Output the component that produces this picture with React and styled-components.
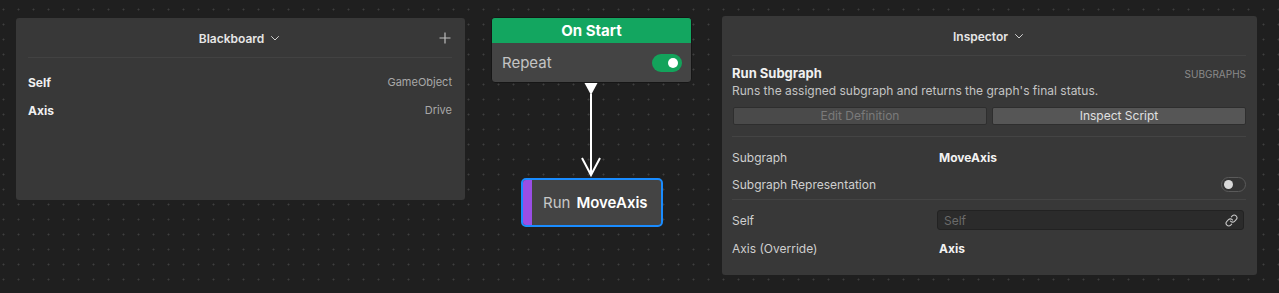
import React from "react";
import styled, { createGlobalStyle } from "styled-components";

const Global = createGlobalStyle`
  html, body { margin: 0; padding: 0; background: #1f1f1f; }
  body { font-family: Inter, "Noto Sans", sans-serif; -webkit-font-smoothing: antialiased; }
  * { box-sizing: border-box; }
`;

const Canvas = styled.div`
  width: 1279px;
  height: 293px;
  overflow: hidden;
  background-color: #1f1f1f;
  background-image: radial-gradient(circle, #3e3e3e 0.8px, transparent 1.2px);
  background-size: 15px 15px;
  background-position: -4px 2px;
  display: flex;
  align-items: flex-start;
  padding-left: 16px;
`;

const Panel = styled.section`
  background: #383838;
  border-radius: 3px;
  width: ${(p) => p.$w}px;
  height: ${(p) => p.$h}px;
  margin-top: ${(p) => p.$top}px;
  padding: ${(p) => p.$pad};
  display: flex;
  flex-direction: column;
  flex-shrink: 0;
`;

const PanelHeader = styled.header`
  position: relative;
  height: 40px;
  padding-top: 1px;
  display: flex;
  align-items: center;
  justify-content: center;
  gap: 5px;
  border-bottom: 1px solid #424242;
  color: #e6e6e6;
  font-size: 12px;
  font-weight: 600;
`;

const HeaderAction = styled.span`
  position: absolute;
  right: 1px;
  top: 50%;
  transform: translateY(-50%);
  display: flex;
  color: #bdbdbd;
`;

const VarList = styled.div`
  display: flex;
  flex-direction: column;
  padding-top: 16px;
  gap: 12px;
`;

const VarRow = styled.div`
  display: flex;
  justify-content: space-between;
  align-items: center;
  height: 16px;
`;

const VarName = styled.span`
  color: #f0f0f0;
  font-size: 12px;
  font-weight: 700;
`;

const VarType = styled.span`
  color: #a8a8a8;
  font-size: 11px;
`;

const Graph = styled.div`
  position: relative;
  width: 257px;
  height: 293px;
  flex-shrink: 0;
`;

const Node = styled.div`
  position: absolute;
  left: ${(p) => p.$x}px;
  top: ${(p) => p.$y}px;
  width: ${(p) => p.$w}px;
  height: ${(p) => p.$h}px;
  background: #444444;
  border-radius: 4px;
  overflow: hidden;
`;

const StartNode = styled(Node)`
  border: 1px solid #161616;
  display: flex;
  flex-direction: column;
`;

const NodeTitle = styled.div`
  background: #13a660;
  height: 25px;
  display: flex;
  align-items: center;
  justify-content: center;
  color: #ffffff;
  font-size: 15px;
  font-weight: 700;
`;

const NodeBody = styled.div`
  flex: 1;
  display: flex;
  align-items: center;
  justify-content: space-between;
  padding: 0 9px 0 10px;
  color: #c4c4c4;
  font-size: 15px;
`;

const Toggle = styled.span`
  width: ${(p) => p.$w}px;
  height: ${(p) => p.$h}px;
  border-radius: 999px;
  display: flex;
  align-items: center;
  justify-content: ${(p) => (p.$on ? "flex-end" : "flex-start")};
  padding: 0 ${(p) => p.$pad}px;
  background: ${(p) => (p.$on ? "#13a35b" : "#343434")};
  border: ${(p) => (p.$on ? "none" : "1px solid #5a5a5a")};
  flex-shrink: 0;
  &::after {
    content: "";
    width: ${(p) => p.$knob}px;
    height: ${(p) => p.$knob}px;
    border-radius: 50%;
    background: ${(p) => (p.$on ? "#ffffff" : "#d8d8d8")};
  }
`;

const Wire = styled.svg`
  position: absolute;
  left: 115px;
  top: 82px;
`;

const RunNode = styled(Node)`
  border: 2px solid #1a8cff;
  border-radius: 5px;
  display: flex;
  align-items: stretch;
`;

const Stripe = styled.span`
  width: 9px;
  background: #9a4ee6;
  flex-shrink: 0;
`;

const RunLabel = styled.div`
  flex: 1;
  display: flex;
  align-items: center;
  padding-left: 11px;
  gap: 6px;
  font-size: 15px;
  color: #c8c8c8;
  b { color: #ffffff; font-weight: 600; }
`;

const Section = styled.div`
  display: flex;
  flex-direction: column;
  padding: ${(p) => p.$pad || "0"};
  border-bottom: ${(p) => (p.$line ? "1px solid #444444" : "none")};
  gap: ${(p) => p.$gap || 0}px;
`;

const TitleRow = styled.div`
  display: flex;
  justify-content: space-between;
  align-items: baseline;
  height: 16px;
`;

const NodeName = styled.span`
  color: #f0f0f0;
  font-size: 13px;
  font-weight: 700;
`;

const Category = styled.span`
  color: #8a8a8a;
  font-size: 10px;
`;

const Description = styled.p`
  margin: 0;
  height: 15px;
  line-height: 15px;
  color: #c4c4c4;
  font-size: 12px;
`;

const ButtonRow = styled.div`
  display: grid;
  grid-template-columns: 1fr 1fr;
  gap: 5px;
  margin-top: 7px;
  padding-left: 1px;
`;

const Button = styled.button`
  height: 18px;
  border: 1px solid #2e2e2e;
  border-radius: 2px;
  background: ${(p) => (p.disabled ? "#4a4a4a" : "#565656")};
  color: ${(p) => (p.disabled ? "#7a7a7a" : "#e0e0e0")};
  font-family: inherit;
  font-size: 12px;
  line-height: 16px;
  padding: 0;
`;

const FieldRow = styled.div`
  display: grid;
  grid-template-columns: ${(p) => (p.$split ? "1fr auto" : "205px 1fr")};
  align-items: center;
  height: ${(p) => p.$h}px;
`;

const FieldLabel = styled.span`
  color: #cfcfcf;
  font-size: 12px;
`;

const FieldValue = styled.span`
  padding-left: 2px;
  color: #f2f2f2;
  font-size: 12px;
  font-weight: 700;
`;

const InputBox = styled.div`
  height: 20px;
  margin-right: 2px;
  background: #2b2b2b;
  border: 1px solid #222222;
  border-radius: 3px;
  display: flex;
  align-items: center;
  justify-content: space-between;
  padding: 0 5px 0 6px;
  color: #6a6a6a;
  font-size: 12px;
`;

const Chevron = () => (
  <svg width="12" height="12" viewBox="0 0 24 24" fill="none" stroke="#cfcfcf" strokeWidth="2" strokeLinecap="round" strokeLinejoin="round">
    <path d="m5 9 7 7 7-7" />
  </svg>
);

const Plus = () => (
  <svg width="12" height="12" viewBox="0 0 12 12" fill="none" stroke="#bdbdbd" strokeWidth="1.2">
    <path d="M6 0.5v11M0.5 6h11" />
  </svg>
);

const LinkIcon = () => (
  <svg width="13" height="13" viewBox="0 0 24 24" fill="none" stroke="#c8c8c8" strokeWidth="2" strokeLinecap="round" strokeLinejoin="round">
    <path d="M10 13a5 5 0 0 0 7.54.54l3-3a5 5 0 0 0-7.07-7.07l-1.72 1.71" />
    <path d="M14 11a5 5 0 0 0-7.54-.54l-3 3a5 5 0 0 0 7.07 7.07l1.71-1.71" />
  </svg>
);

export default function App() {
  return (
    <>
      <Global />
      <Canvas>
        <Panel $w={449} $h={182} $top={18} $pad="0 13px 0 12px">
          <PanelHeader>
            Blackboard <Chevron />
            <HeaderAction><Plus /></HeaderAction>
          </PanelHeader>
          <VarList>
            <VarRow>
              <VarName>Self</VarName>
              <VarType>GameObject</VarType>
            </VarRow>
            <VarRow>
              <VarName>Axis</VarName>
              <VarType>Drive</VarType>
            </VarRow>
          </VarList>
        </Panel>

        <Graph>
          <StartNode $x={26} $y={17} $w={201} $h={66}>
            <NodeTitle>On Start</NodeTitle>
            <NodeBody>
              Repeat
              <Toggle $on $w={30} $h={18} $pad={4} $knob={10} />
            </NodeBody>
          </StartNode>
          <Wire width="22" height="96" viewBox="0 0 22 96">
            <path d="M4.5 1 L17.5 1 L11 13 Z" fill="#ffffff" />
            <path d="M11 12 V93" stroke="#ffffff" strokeWidth="2" />
            <path d="M2 76 L11 93 L20 76" stroke="#ffffff" strokeWidth="2" fill="none" strokeLinejoin="miter" />
          </Wire>
          <RunNode $x={56} $y={178} $w={142} $h={49}>
            <Stripe />
            <RunLabel>
              Run <b>MoveAxis</b>
            </RunLabel>
          </RunNode>
        </Graph>

        <Panel $w={535} $h={259} $top={16} $pad="0 11px 0 10px">
          <PanelHeader>
            Inspector <Chevron />
          </PanelHeader>
          <Section $pad="9px 0 11px" $line $gap={2}>
            <TitleRow>
              <NodeName>Run Subgraph</NodeName>
              <Category>SUBGRAPHS</Category>
            </TitleRow>
            <Description>Runs the assigned subgraph and returns the graph's final status.</Description>
            <ButtonRow>
              <Button disabled>Edit Definition</Button>
              <Button>Inspect Script</Button>
            </ButtonRow>
          </Section>
          <Section $pad="6px 0 2px" $line>
            <FieldRow $h={28}>
              <FieldLabel>Subgraph</FieldLabel>
              <FieldValue>MoveAxis</FieldValue>
            </FieldRow>
            <FieldRow $h={26} $split>
              <FieldLabel>Subgraph Representation</FieldLabel>
              <Toggle $w={25} $h={15} $pad={2} $knob={9} />
            </FieldRow>
          </Section>
          <Section $pad="6px 0 0">
            <FieldRow $h={28}>
              <FieldLabel>Self</FieldLabel>
              <InputBox>
                Self
                <LinkIcon />
              </InputBox>
            </FieldRow>
            <FieldRow $h={28}>
              <FieldLabel>Axis (Override)</FieldLabel>
              <FieldValue>Axis</FieldValue>
            </FieldRow>
          </Section>
        </Panel>
      </Canvas>
    </>
  );
}
